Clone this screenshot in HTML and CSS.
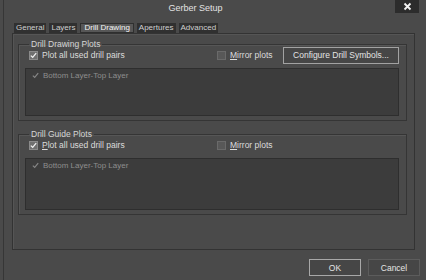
FILE: index.html
```html
<!DOCTYPE html>
<html lang="en">

<head>
    <meta charset="UTF-8">
    <title>Gerber Setup</title>
    <link rel="stylesheet" href="styles.css">
</head>

<body>

    <div class="window">
        <div class="titlebar">
            <div class="title">Gerber Setup</div>
            <div class="close">
                <svg width="9" height="9" viewBox="0 0 9 9">
                    <path d="M1.5 1.5 L7.5 7.5 M7.5 1.5 L1.5 7.5" stroke="#f2f2f2" stroke-width="1.8" />
                </svg>
            </div>
        </div>

        <div class="tabs">
            <span class="tab">General</span>
            <span class="tab">Layers</span>
            <span class="tab selected">Drill Drawing</span>
            <span class="tab">Apertures</span>
            <span class="tab">Advanced</span>
        </div>

        <div class="panel">
            <fieldset class="group">
                <legend>Drill Drawing Plots</legend>
                <div class="options">
                    <label class="check wide">
                        <span class="box on">
                            <svg width="7" height="7" viewBox="0 0 7 7"><path d="M0.8 3.6 L2.7 5.4 L6.2 1.2" /></svg>
                        </span>
                        Plot all used drill pairs
                    </label>
                    <label class="check"><span class="box"></span><span><u>M</u>irror plots</span></label>
                    <button class="btn configure">Configure Drill Symbols...</button>
                </div>
                <div class="list">
                    <div class="item">
                        <svg width="7" height="7" viewBox="0 0 7 7"><path d="M0.8 3.6 L2.7 5.4 L6.2 1.2" /></svg>
                        Bottom Layer-Top Layer
                    </div>
                </div>
            </fieldset>

            <fieldset class="group second">
                <legend>Drill Guide Plots</legend>
                <div class="options">
                    <label class="check wide">
                        <span class="box on">
                            <svg width="7" height="7" viewBox="0 0 7 7"><path d="M0.8 3.6 L2.7 5.4 L6.2 1.2" /></svg>
                        </span>
                        <span><u>P</u>lot all used drill pairs</span>
                    </label>
                    <label class="check"><span class="box"></span><span><u>M</u>irror plots</span></label>
                </div>
                <div class="list tall">
                    <div class="item">
                        <svg width="7" height="7" viewBox="0 0 7 7"><path d="M0.8 3.6 L2.7 5.4 L6.2 1.2" /></svg>
                        Bottom Layer-Top Layer
                    </div>
                </div>
            </fieldset>
        </div>

        <div class="footer">
            <button class="btn default">OK</button>
            <button class="btn">Cancel</button>
        </div>
    </div>

</body>

</html>
```

FILE: styles.css
```css
html,
body {
    margin: 0;
    padding: 0;
    background: #4a4a4a;
    color: #dcdcdc;
    font-family: "Liberation Sans", Arial, sans-serif;
    font-size: 8.5px;
    height: 100%;
    overflow: hidden;
}

.window {
    height: 280px;
    margin-left: 3px;
    border-left: 1px solid #363636;
    box-sizing: border-box;
}

.titlebar {
    display: flex;
    height: 17px;
}

.title {
    flex: 1;
    text-align: center;
    font-size: 9px;
    line-height: 16px;
    padding-right: 8px;
    color: #e2e2e2;
}

.close {
    width: 24px;
    height: 13px;
    margin-right: 7px;
    background: #2c2c2c;
    display: flex;
    align-items: center;
    justify-content: center;
}

.tabs {
    display: flex;
    gap: 3px;
    margin-top: 6px;
    padding-left: 10px;
    height: 10px;
}

.tab {
    background: #303030;
    color: #cfcfcf;
    font-size: 8px;
    line-height: 10px;
    padding: 0 2px;
}

.tab.selected {
    background: #575757;
    color: #f4f4f4;
    padding: 0 4px;
    box-shadow: inset 0 0 0 1px #2f2f2f;
}

.panel {
    height: 217px;
    margin: 0 11px 0 8px;
    padding: 0 7px 0 5px;
    border: 1px solid #333333;
    box-shadow: inset 1px 1px 0 #555555;
    box-sizing: border-box;
}

.group {
    margin: 7px 0 0 0;
    padding: 0 7px 4px 6px;
    border: 1px solid #353535;
    box-shadow: inset 1px 1px 0 #565656;
}

.group.second {
    margin-top: 10px;
}

.group legend {
    padding: 0 2px;
    margin-left: 4px;
    line-height: 6px;
    color: #d6d6d6;
}

.options {
    display: flex;
    align-items: center;
    height: 16px;
}

.check {
    display: flex;
    align-items: center;
    gap: 4px;
}

.check.wide {
    width: 188px;
    margin-left: 4px;
}

.box {
    width: 9px;
    height: 9px;
    box-sizing: border-box;
    border: 1px solid #6a6a6a;
    background: #585858;
    display: flex;
    align-items: center;
    justify-content: center;
}

.box.on {
    background: #707070;
    border-color: #8a8a8a;
}

.box svg path {
    fill: none;
    stroke: #f0f0f0;
    stroke-width: 1.3;
}

.btn {
    font-family: "Liberation Sans", Arial, sans-serif;
    font-size: 8.5px;
    color: #e4e4e4;
    background: #464646;
    border: 1px solid #5c5c5c;
    height: 17px;
    padding: 0;
    box-sizing: border-box;
}

.btn.configure {
    margin-left: auto;
    width: 116px;
    border-color: #a2a2a2;
}

.list {
    margin-top: 5px;
    height: 48px;
    background: #3c3c3c;
    border: 1px solid #2e2e2e;
    box-sizing: border-box;
    padding: 1px 0 0 6px;
}

.list.tall {
    height: 52px;
}

.item {
    display: flex;
    align-items: center;
    gap: 4px;
    height: 11px;
    color: #8e8e8e;
    font-size: 8px;
}

.item svg path {
    fill: none;
    stroke: #858585;
    stroke-width: 1.2;
}

.footer {
    display: flex;
    justify-content: flex-end;
    gap: 7px;
    margin-top: 9px;
    padding-right: 6px;
}

.footer .btn {
    width: 52px;
}

.footer .btn.default {
    border-color: #a8a8a8;
}
```
